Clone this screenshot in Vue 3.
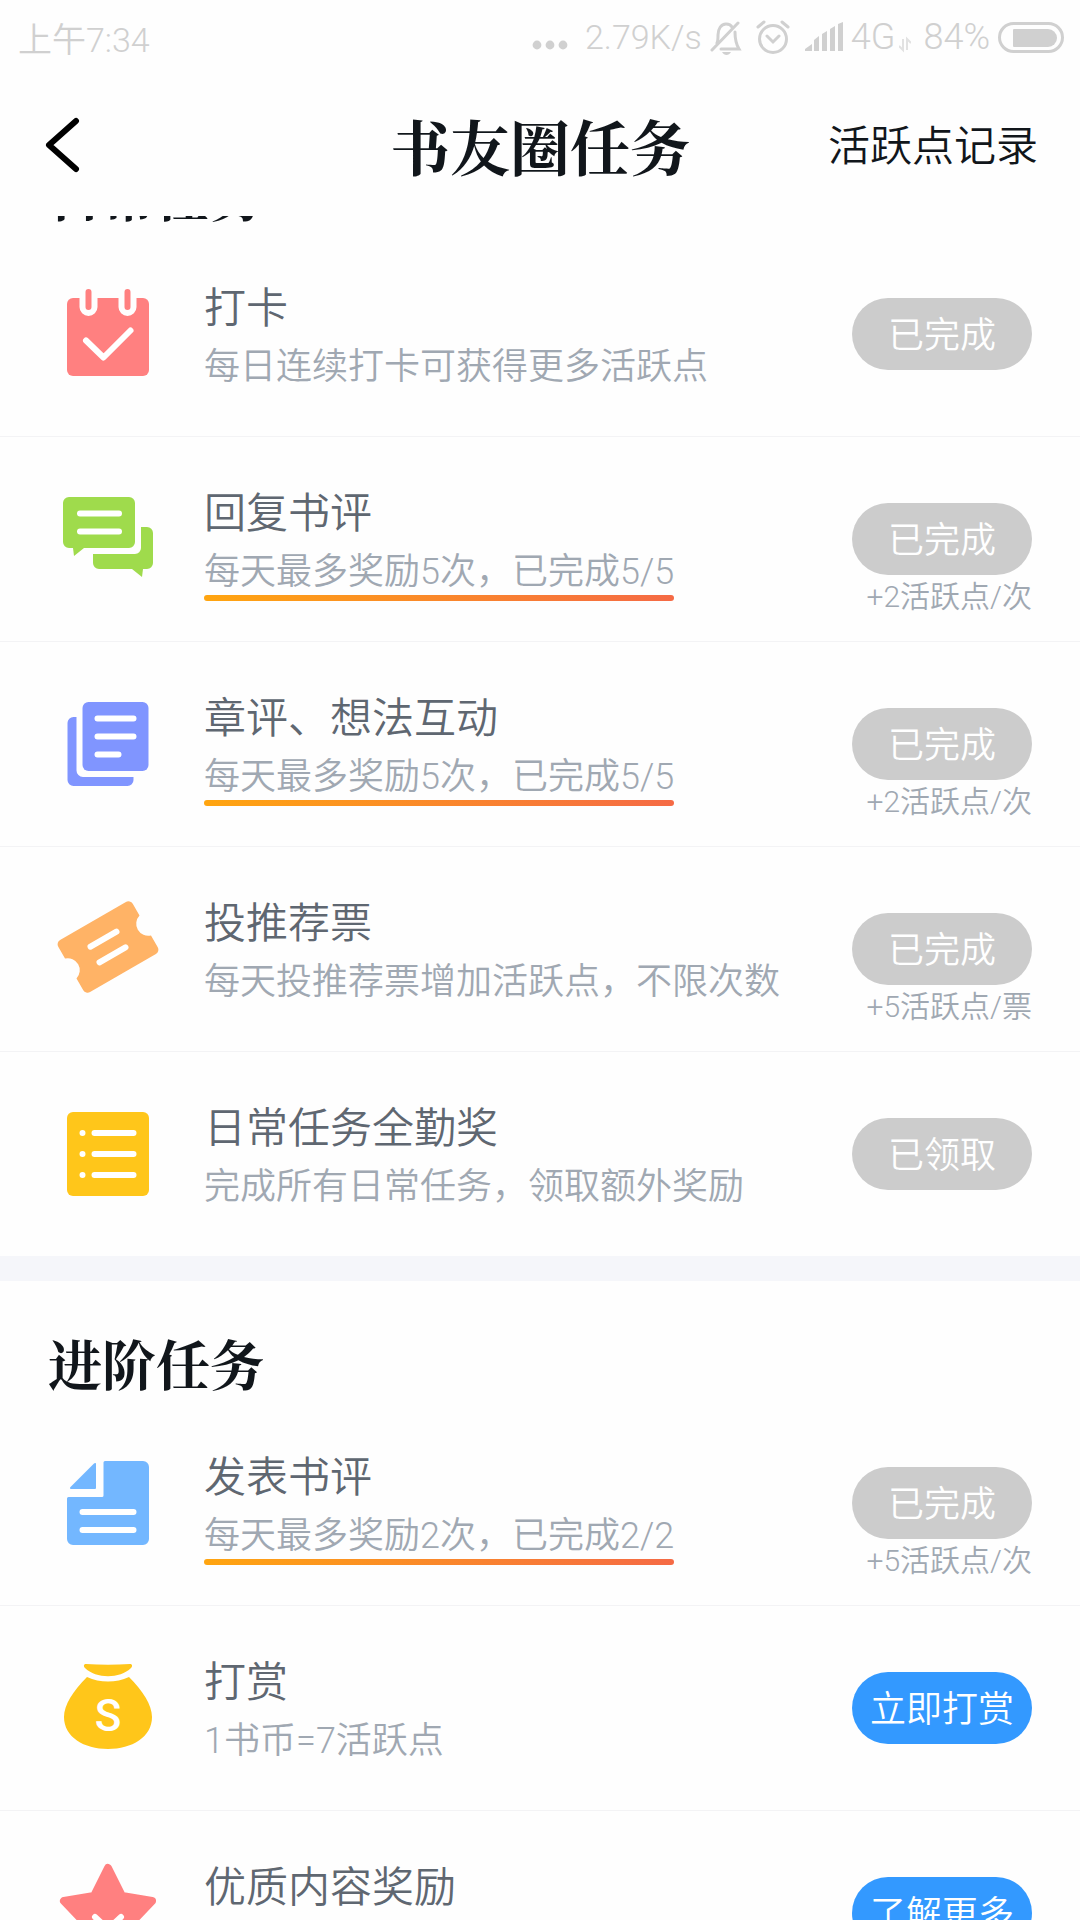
<template>
  <div class="app">
    <div class="status-bar">
      <span>上午7:34</span>
      <div class="status-right">
        <svg class="dots" width="36" height="40" viewBox="0 0 36 40">
          <circle cx="5" cy="28" r="4.4" />
          <circle cx="18" cy="28" r="4.4" />
          <circle cx="31" cy="28" r="4.4" />
        </svg>
        <span class="speed">2.79K/s</span>
        <svg class="bell line" width="32" height="40" viewBox="0 0 32 40">
          <path d="M2 33 28 6M7 26c1-2 1-4 1-8 0-6 3-11 8-11 3 0 5 1 6 3M25 15c0 6 1 12 4 17H11" />
          <path class="fill" d="M12 35h9c-1 2-3 3-4.500 3s-3.500-1-4.500-3z" />
        </svg>
        <svg class="alarm line" width="34" height="40" viewBox="0 0 34 40">
          <circle cx="17" cy="22" r="13.500" />
          <path d="m11 19 6 6 6-6M2 10l6-5M32 10l-6-5" />
        </svg>
        <svg class="signal" width="40" height="40" viewBox="0 0 40 40">
          <path d="M1 34v-2l7-5v7zM10 34V23l5-4v15zM18 34V17l5-3v20zM26 34V12l5-3v25zM34 34V7l5-2v29z" />
        </svg>
        <span class="network">4G</span>
        <svg class="data" width="12" height="40" viewBox="0 0 12 40">
          <path d="M4 22v11l-4-4M8 33V22l4 4" />
        </svg>
        <span class="percent">84%</span>
        <svg class="battery" width="66" height="40" viewBox="0 0 66 40">
          <rect class="shell" x="1.500" y="6.500" width="63" height="28" rx="14" />
          <path d="M16 12h34a9 9 0 0 1 0 18H16a1 1 0 0 1-1-1V13a1 1 0 0 1 1-1z" />
        </svg>
      </div>
    </div>

    <header class="nav-bar">
      <button class="btn-back" type="button" aria-label="返回">
        <svg width="40" height="56" viewBox="0 0 40 56">
          <path d="M34 4 7 28l27 24" />
        </svg>
      </button>
      <h1 class="nav-title">书友圈任务</h1>
      <a class="nav-link" href="#">活跃点记录</a>
    </header>

    <main ref="list" class="task-list">
      <section v-for="section in sections" :key="section.title" class="task-section">
        <h2 class="section-title">{{ section.title }}</h2>
        <div v-for="task in section.tasks" :key="task.title" class="task">
          <svg class="task-icon" :class="task.icon" width="108" height="108" viewBox="0 0 108 108">
            <template v-if="task.icon === 'calendar'">
              <rect x="13" y="18" width="82" height="78" rx="6" />
              <path class="gap" d="M34.500 12v15M73.500 12v15" />
              <path class="post" d="M34.500 12v15M73.500 12v15" />
              <path class="mark" d="M32 60.500 49.500 77.500 76.500 50.500" />
            </template>
            <template v-else-if="task.icon === 'chat'">
              <path d="M15 12h60a6 6 0 0 1 6 6v39a6 6 0 0 1-6 6H30l-10 8-1-8h-4a6 6 0 0 1-6-6V18a6 6 0 0 1 6-6z" />
              <path d="M87 42h6a6 6 0 0 1 6 6v30a6 6 0 0 1-6 6h-4l-1 8-10-8H45a6 6 0 0 1-6-6v-9h42a6 6 0 0 0 6-6z" />
              <path class="mark" d="M26 28.500h39M26 46.500h39" />
            </template>
            <template v-else-if="task.icon === 'notes'">
              <rect x="28.500" y="12" width="66" height="69" rx="6" />
              <path d="M22.500 27h-3a6 6 0 0 0-6 6v57a6 6 0 0 0 6 6h54a6 6 0 0 0 6-6v-3H29a6.500 6.500 0 0 1-6.500-6.500z" />
              <path class="mark" d="M43.500 28.500h36M43.500 46.500h36M43.500 64.500h21" />
            </template>
            <template v-else-if="task.icon === 'ticket'">
              <g transform="rotate(-30 54 52)">
                <path d="M16 22h76a5 5 0 0 1 5 5v13.500a12 12 0 0 0 0 23V77a5 5 0 0 1-5 5H16a5 5 0 0 1-5-5V63.500a12 12 0 0 0 0-23V27a5 5 0 0 1 5-5z" />
                <path class="mark" d="M39 43h30M39 61h30" />
              </g>
            </template>
            <template v-else-if="task.icon === 'list'">
              <rect x="13" y="12" width="82" height="84" rx="6" />
              <path class="mark" d="M40.500 33h39M40.500 54h39M40.500 75h39M28.500 33h0M28.500 54h0M28.500 75h0" />
            </template>
            <template v-else-if="task.icon === 'article'">
              <path d="M51 12h38a6 6 0 0 1 6 6v72a6 6 0 0 1-6 6H19a6 6 0 0 1-6-6V49.500a1.500 1.500 0 0 1 1.500-1.500H48a1.500 1.500 0 0 0 1.500-1.500v-33A1.500 1.500 0 0 1 51 12z" />
              <path d="M40 14.500c1-1 2-.5 2 .5v24a1 1 0 0 1-1 1H17c-1 0-1.500-1-.5-2z" />
              <path class="mark" d="M28.500 63h51M28.500 81h51" />
            </template>
            <template v-else-if="task.icon === 'bag'">
              <path d="M32 10c15 1 29 1 44 0 2 0 3 2 1 4-11 11-35 11-46 0-2-2-1-4 1-4z" />
              <path d="M33 23c13 6 29 6 42 0 14 14 23 28 23 40 0 20-20 32-44 32S10 83 10 63c0-12 9-26 23-40z" />
              <text x="54" y="77" text-anchor="middle">S</text>
            </template>
            <template v-else>
              <path class="star" d="m54 9 14 28 30 5-21 22 4 32-27-14-27 14 4-32-21-22 30-5z" />
              <path class="mark" d="m41 58 13 12 13-12" />
            </template>
          </svg>
          <div class="task-body">
            <h3 class="task-title">{{ task.title }}</h3>
            <p class="task-desc" :class="{ underlined: task.underlined }">{{ task.desc }}</p>
          </div>
          <div class="task-side">
            <button class="btn-task" type="button" :disabled="task.done">{{ task.action }}</button>
            <span v-if="task.reward" class="task-reward">{{ task.reward }}</span>
          </div>
        </div>
      </section>
    </main>
  </div>
</template>

<script setup>
import { onMounted, ref } from 'vue';

const list = ref(null);

const sections = [
  {
    title: '日常任务',
    tasks: [
      { icon: 'calendar', title: '打卡', desc: '每日连续打卡可获得更多活跃点', action: '已完成', done: true },
      { icon: 'chat', title: '回复书评', desc: '每天最多奖励5次，已完成5/5', underlined: true, action: '已完成', done: true, reward: '+2活跃点/次' },
      { icon: 'notes', title: '章评、想法互动', desc: '每天最多奖励5次，已完成5/5', underlined: true, action: '已完成', done: true, reward: '+2活跃点/次' },
      { icon: 'ticket', title: '投推荐票', desc: '每天投推荐票增加活跃点，不限次数', action: '已完成', done: true, reward: '+5活跃点/票' },
      { icon: 'list', title: '日常任务全勤奖', desc: '完成所有日常任务，领取额外奖励', action: '已领取', done: true }
    ]
  },
  {
    title: '进阶任务',
    tasks: [
      { icon: 'article', title: '发表书评', desc: '每天最多奖励2次，已完成2/2', underlined: true, action: '已完成', done: true, reward: '+5活跃点/次' },
      { icon: 'bag', title: '打赏', desc: '1书币=7活跃点', action: '立即打赏', done: false },
      { icon: 'star', title: '优质内容奖励', desc: '', action: '了解更多', done: false }
    ]
  }
];

// The list opens just past the first section title
onMounted(() => {
  list.value.scrollTop = 104;
});
</script>

<style>
body {
  margin: 0;
}
</style>

<style scoped>
.app {
  display: flex;
  flex-direction: column;
  height: 100vh;
  overflow: hidden;
  background: #fefefe;
  color: #11161b;
  font-family: Roboto, "Noto Sans CJK SC", sans-serif;
  font-weight: 350;
}

h1,
h2,
h3,
p {
  margin: 0;
}

button {
  border: none;
  padding: 0;
  font: inherit;
}

.status-bar {
  display: flex;
  flex: none;
  align-items: center;
  justify-content: space-between;
  box-sizing: border-box;
  height: 76px;
  padding: 0 16px 2px 18px;
  color: #d0d0d0;
  font-size: 34px;
}

.status-right {
  display: flex;
  align-items: center;
}

.status-right svg {
  fill: #d0d0d0;
}

.status-right .line {
  fill: none;
  stroke: #d0d0d0;
  stroke-width: 3;
  stroke-linecap: round;
}

.line .fill {
  fill: #d0d0d0;
  stroke: none;
}

.speed {
  margin: 0 8px 0 17px;
}

.alarm {
  margin: 0 14px;
}

.signal {
  margin-right: 7px;
}

.network,
.percent {
  font-size: 36px;
}

.status-right .data {
  margin: 0 12px 0 4px;
  fill: none;
  stroke: #e2e2e2;
  stroke-width: 2;
}

.percent {
  margin-right: 8px;
}

.battery .shell {
  fill: none;
  stroke: #d0d0d0;
  stroke-width: 3;
}

.nav-bar {
  display: grid;
  flex: none;
  grid-template-columns: 1fr auto 1fr;
  align-items: center;
  box-sizing: border-box;
  height: 140px;
  padding: 0 42px 3px;
}

.btn-back {
  width: 40px;
  height: 56px;
  background: none;
  cursor: pointer;
}

.btn-back svg {
  display: block;
  fill: none;
  stroke: #000;
  stroke-width: 6;
  stroke-linecap: round;
  stroke-linejoin: round;
}

.nav-title,
.section-title {
  font-family: "Noto Serif CJK SC", "Noto Sans CJK SC", serif;
  font-weight: 700;
}

.nav-title {
  font-size: 60px;
  line-height: 80px;
}

.nav-link {
  justify-self: end;
  padding-top: 4px;
  color: #11161b;
  font-size: 42px;
  line-height: 50px;
  text-decoration: none;
}

.task-list {
  flex: 1;
  min-height: 0;
  overflow-y: auto;
  scrollbar-width: none;
}

.task-section + .task-section {
  border-top: 25px solid #f5f6fa;
}

.section-title {
  padding: 52px 48px 8px;
  font-size: 54px;
  line-height: 60px;
}

.task {
  display: flex;
  align-items: flex-start;
  box-sizing: border-box;
  height: 205px;
  padding: 0 48px 0 54px;
  border-bottom: 1px solid #f3f3f5;
}

.task:last-child {
  height: 204px;
  border-bottom: none;
}

.task-icon {
  flex: none;
  margin-top: 48px;
}

.task-icon .mark {
  fill: none;
  stroke: #fff;
  stroke-width: 6;
  stroke-linecap: round;
  stroke-linejoin: round;
}

.calendar,
.star {
  fill: #ff8080;
}

.calendar .gap,
.calendar .post {
  stroke: #fefefe;
  stroke-width: 18;
  stroke-linecap: round;
}

.calendar .post {
  stroke: #ff8080;
  stroke-width: 6;
}

.star .star {
  stroke: #ff8080;
  stroke-width: 8;
  stroke-linejoin: round;
}

.chat {
  fill: #9fdb4c;
}

.notes {
  fill: #8095ff;
}

.ticket {
  fill: #ffb366;
}

.list,
.bag {
  fill: #ffc61a;
}

.article {
  fill: #73b7ff;
}

.bag text {
  fill: #fff;
  font-size: 44px;
  font-weight: 500;
}

.task-body {
  flex: 1;
  padding: 52px 0 0 42px;
}

.task-title {
  color: #5f6771;
  font-size: 42px;
  font-weight: 350;
  line-height: 50px;
}

.task-desc {
  width: fit-content;
  margin-top: 8px;
  color: #a0a8b2;
  font-size: 36px;
  line-height: 50px;
  white-space: nowrap;
}

.underlined::after {
  display: block;
  height: 6px;
  margin-top: -2px;
  border-radius: 3px;
  background: linear-gradient(90deg, #ffa510, #f56a45);
  content: "";
}

.task-side {
  display: flex;
  flex: none;
  flex-direction: column;
  align-items: flex-end;
  padding-top: 66px;
}

.btn-task {
  width: 180px;
  height: 72px;
  padding-bottom: 4px;
  border-radius: 36px;
  background: #39f;
  color: #fff;
  font-size: 36px;
  cursor: pointer;
}

.btn-task:disabled {
  background: #ccc;
  cursor: default;
}

.task-reward {
  margin-top: 2px;
  color: #a0a8b2;
  font-size: 30px;
  line-height: 40px;
}
</style>
